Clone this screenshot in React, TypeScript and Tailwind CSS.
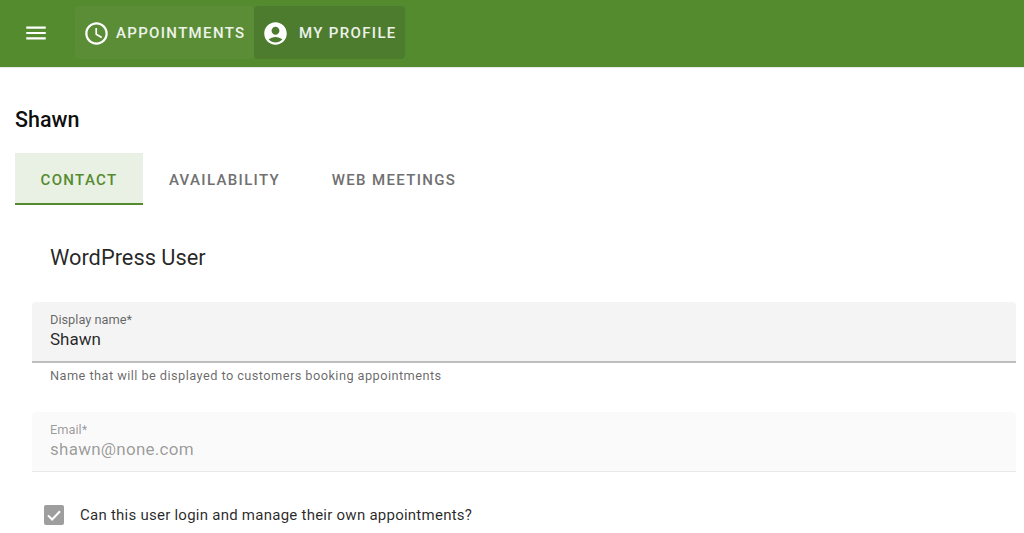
function MenuIcon() {
  return (
    <svg width="26" height="26" viewBox="0 0 24 24" fill="white">
      <path d="M3 18h18v-2H3v2zm0-5h18v-2H3v2zm0-7v2h18V6H3z" />
    </svg>
  );
}

function ClockIcon() {
  return (
    <svg width="27" height="27" viewBox="0 0 24 24" fill="white">
      <path d="M11.99 2C6.47 2 2 6.48 2 12s4.47 10 9.99 10C17.52 22 22 17.52 22 12S17.52 2 11.99 2zM12 20c-4.42 0-8-3.58-8-8s3.58-8 8-8 8 3.58 8 8-3.58 8-8 8z" />
      <path d="M12.5 7H11v6l5.25 3.15.75-1.23-4.5-2.67z" />
    </svg>
  );
}

function ProfileIcon() {
  return (
    <svg width="27" height="27" viewBox="0 0 24 24" fill="white">
      <path d="M12 2C6.48 2 2 6.48 2 12s4.48 10 10 10 10-4.48 10-10S17.52 2 12 2zm0 4c1.93 0 3.5 1.57 3.5 3.5S13.93 13 12 13s-3.5-1.57-3.5-3.5S10.07 6 12 6zm0 14c-2.03 0-4.43-.82-6.14-2.88C7.55 15.8 9.68 15 12 15s4.45.8 6.14 2.12C16.43 19.18 14.03 20 12 20z" />
    </svg>
  );
}

export default function App() {
  return (
    <div className="h-[533px] w-[1024px] overflow-hidden bg-white font-['Roboto',sans-serif]">
      {/* top bar */}
      <header className="flex h-[67px] items-center bg-[#558b2f] pb-[2px] shadow-[0_1px_1px_rgba(0,0,0,0.08)]">
        <div className="flex w-[75px] justify-center pr-[3px]">
          <MenuIcon />
        </div>
        <nav className="flex h-[53px] items-center">
          <a className="flex h-full w-[179px] items-center rounded bg-[#5a8d36] pl-[8px] pt-[1px] text-[15px] font-medium tracking-[1.34px] text-white/90">
            <ClockIcon />
            <span className="ml-[6px]">APPOINTMENTS</span>
          </a>
          <a className="flex h-full w-[151px] items-center rounded bg-[#4d7c2f] pl-[8px] pt-[1px] text-[15px] font-medium tracking-[1.34px] text-white/90">
            <ProfileIcon />
            <span className="ml-[10px]">MY PROFILE</span>
          </a>
        </nav>
      </header>

      <main className="pl-[15px] pr-[8px]">
        <h1 className="mt-[38px] text-[21.5px] font-medium leading-[29px] text-black/95">Shawn</h1>

        {/* tabs */}
        <div className="mt-[19px] flex h-[52px] text-[15px] font-medium tracking-[1.34px]">
          <div className="flex w-[128px] items-center justify-center border-b-2 border-[#558b2f] bg-[#e9f0e4] pt-[5px] text-[#558b2f]">
            CONTACT
          </div>
          <div className="flex w-[163px] items-center justify-center pt-[3px] text-[#707070]">AVAILABILITY</div>
          <div className="flex w-[176px] items-center justify-center pt-[3px] text-[#707070]">WEB MEETINGS</div>
        </div>

        <div className="pl-[17px]">
          <h2 className="mt-[37px] pl-[18px] text-[21.8px] leading-[32px] text-black/85">WordPress User</h2>

          <div className="mt-[28px] flex h-[61px] flex-col rounded-t border-b-2 border-[#bdbdbd] bg-[#f4f4f4] pl-[18px]">
            <label className="mt-[10px] text-[12.8px] leading-[15px] text-black/60">Display name*</label>
            <div className="text-[17px] leading-[24px] text-black/85">Shawn</div>
          </div>
          <p className="mt-[4px] pl-[18px] text-[12.8px] leading-[18px] tracking-[0.43px] text-black/60">
            Name that will be displayed to customers booking appointments
          </p>

          <div className="mt-[27px] flex h-[60px] flex-col rounded-t border-b border-[#e8e8e8] bg-[#fafafa] pl-[18px]">
            <label className="mt-[10px] text-[12.8px] leading-[15px] text-black/40">Email*</label>
            <div className="text-[17px] leading-[24px] tracking-[0.25px] text-black/40">shawn@none.com</div>
          </div>

          <div className="mt-[32px] flex items-center pl-[12px]">
            <span className="flex h-[20px] w-[20px] items-center justify-center rounded-[2px] bg-[#9e9e9e]">
              <svg width="18" height="18" viewBox="0 0 24 24" fill="none" stroke="white" strokeWidth="2.6">
                <path d="M4 12.5l5.5 5.5L20 7" />
              </svg>
            </span>
            <span className="ml-[16px] pt-[1px] text-[15px] leading-[20px] tracking-[0.25px] text-black/85">
              Can this user login and manage their own appointments?
            </span>
          </div>
        </div>
      </main>
    </div>
  );
}
